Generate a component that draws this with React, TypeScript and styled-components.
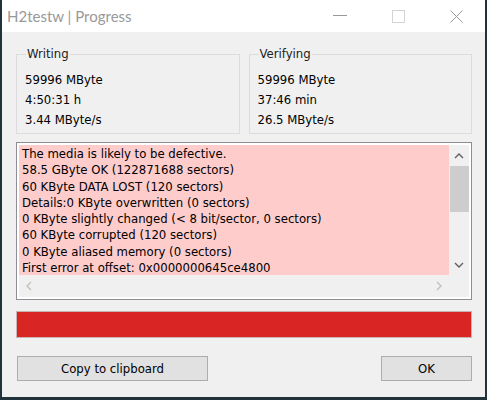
import React from 'react'
import styled, { createGlobalStyle } from 'styled-components'

const GlobalStyle = createGlobalStyle`
  html, body {
    margin: 0;
    padding: 0;
    background: #22323a;
  }
  body {
    font-family: 'DejaVu Sans Condensed', 'DejaVu Sans', sans-serif;
  }
`

const Window = styled.div`
  margin-left: 2px;
  width: 483px;
  height: 397px;
  display: flex;
  flex-direction: column;
  background: #f0f0f0;
`

const TitleBar = styled.div`
  height: 32px;
  flex: none;
  display: flex;
  align-items: center;
  background: #fff;
`

const Title = styled.div`
  flex: 1;
  padding-left: 5px;
  font-family: Lato, 'Noto Sans', sans-serif;
  font-size: 15px;
  color: #999;
`

const CaptionButton = styled.div`
  width: 58px;
  height: 32px;
  display: flex;
  align-items: center;
  justify-content: center;
`

const Client = styled.div`
  flex: 1;
  display: flex;
  flex-direction: column;
  padding: 22px 13px 0 14px;
  font-size: 13px;
  color: #000;
`

const Groups = styled.div`
  display: grid;
  grid-template-columns: 1fr 1fr;
  gap: 9px;
`

const Group = styled.div`
  position: relative;
  height: 80px;
  box-sizing: border-box;
  border: 1px solid #dcdcdc;
  padding: 15px 8px 0;
`

const GroupLabel = styled.span`
  position: absolute;
  top: -9px;
  left: 9px;
  padding: 0 1px;
  line-height: 16px;
  background: #f0f0f0;
  color: #222;
`

const Value = styled.div`
  line-height: 20px;
  white-space: nowrap;
`

const LogBox = styled.div`
  margin-top: 8px;
  height: 158px;
  box-sizing: border-box;
  border: 1px solid #8e8f94;
  background: #fff;
  padding: 2px;
  display: grid;
  grid-template-columns: 1fr 20px;
  grid-template-rows: 130px 22px;
`

const LogText = styled.div`
  background: #ffcccc;
  overflow: hidden;
  padding: 1px 3px;
  line-height: 16.3px;
  white-space: nowrap;
`

const VScroll = styled.div`
  background: #f0f0f0;
  display: flex;
  flex-direction: column;
`

const ScrollArrow = styled.div<{ $size: number }>`
  flex: none;
  width: ${(p) => (p.$size ? p.$size + 'px' : 'auto')};
  height: ${(p) => (p.$size ? 'auto' : '21px')};
  display: flex;
  align-items: center;
  justify-content: center;
`

const Thumb = styled.div`
  height: 46px;
  margin-left: 1px;
  background: #cdcdcd;
`

const Track = styled.div`
  flex: 1;
`

const HScroll = styled.div`
  background: #f0f0f0;
  display: flex;
  align-items: stretch;
`

const Corner = styled.div`
  background: #f0f0f0;
`

const ProgressBar = styled.div`
  margin-top: 11px;
  height: 27px;
  box-sizing: border-box;
  border: 1px solid #c9b4b4;
  background: #da2525;
`

const Buttons = styled.div`
  margin-top: 18px;
  display: flex;
  justify-content: space-between;
`

const Button = styled.button<{ $width: number }>`
  width: ${(p) => p.$width}px;
  height: 25px;
  margin-left: ${(p) => (p.$width > 100 ? '1px' : '0')};
  background: #e1e1e1;
  border: 1px solid #adadad;
  font-family: inherit;
  font-size: 13px;
  color: #000;
  padding: 0;
`

const Chevron = ({ dir, color }: { dir: 'up' | 'down' | 'left' | 'right'; color: string }) => {
  const rot = { up: 0, right: 90, down: 180, left: 270 }[dir]
  return (
    <svg width="10" height="10" viewBox="0 0 10 10" style={{ transform: `rotate(${rot}deg)` }}>
      <path d="M1 7 L5 3 L9 7" fill="none" stroke={color} strokeWidth="1.4" />
    </svg>
  )
}

const lines = [
  'The media is likely to be defective.',
  '58.5 GByte OK (122871688 sectors)',
  '60 KByte DATA LOST (120 sectors)',
  'Details:0 KByte overwritten (0 sectors)',
  '0 KByte slightly changed (< 8 bit/sector, 0 sectors)',
  '60 KByte corrupted (120 sectors)',
  '0 KByte aliased memory (0 sectors)',
  'First error at offset: 0x0000000645ce4800',
]

export default function App() {
  return (
    <>
      <GlobalStyle />
      <Window>
        <TitleBar>
          <Title>H2testw | Progress</Title>
          <CaptionButton>
            <svg width="14" height="2" viewBox="0 0 14 2">
              <rect x="0" y="0" width="14" height="1" fill="#999" />
            </svg>
          </CaptionButton>
          <CaptionButton>
            <svg width="13" height="13" viewBox="0 0 13 13">
              <rect x="0.5" y="0.5" width="12" height="12" fill="none" stroke="#d4d4d4" />
            </svg>
          </CaptionButton>
          <CaptionButton>
            <svg width="13" height="13" viewBox="0 0 13 13">
              <path d="M0.5 0.5 L12.5 12.5 M12.5 0.5 L0.5 12.5" stroke="#999" strokeWidth="1" />
            </svg>
          </CaptionButton>
        </TitleBar>
        <Client>
          <Groups>
            <Group>
              <GroupLabel>Writing</GroupLabel>
              <Value>59996 MByte</Value>
              <Value>4:50:31 h</Value>
              <Value>3.44 MByte/s</Value>
            </Group>
            <Group>
              <GroupLabel>Verifying</GroupLabel>
              <Value>59996 MByte</Value>
              <Value>37:46 min</Value>
              <Value>26.5 MByte/s</Value>
            </Group>
          </Groups>
          <LogBox>
            <LogText>
              {lines.map((l) => (
                <div key={l}>{l}</div>
              ))}
            </LogText>
            <VScroll>
              <ScrollArrow $size={0}>
                <Chevron dir="up" color="#606060" />
              </ScrollArrow>
              <Thumb />
              <Track />
              <ScrollArrow $size={0}>
                <Chevron dir="down" color="#606060" />
              </ScrollArrow>
            </VScroll>
            <HScroll>
              <ScrollArrow $size={20}>
                <Chevron dir="left" color="#c0c0c0" />
              </ScrollArrow>
              <Track />
              <ScrollArrow $size={20}>
                <Chevron dir="right" color="#c0c0c0" />
              </ScrollArrow>
            </HScroll>
            <Corner />
          </LogBox>
          <ProgressBar />
          <Buttons>
            <Button $width={191}>Copy to clipboard</Button>
            <Button $width={91}>OK</Button>
          </Buttons>
        </Client>
      </Window>
    </>
  )
}
